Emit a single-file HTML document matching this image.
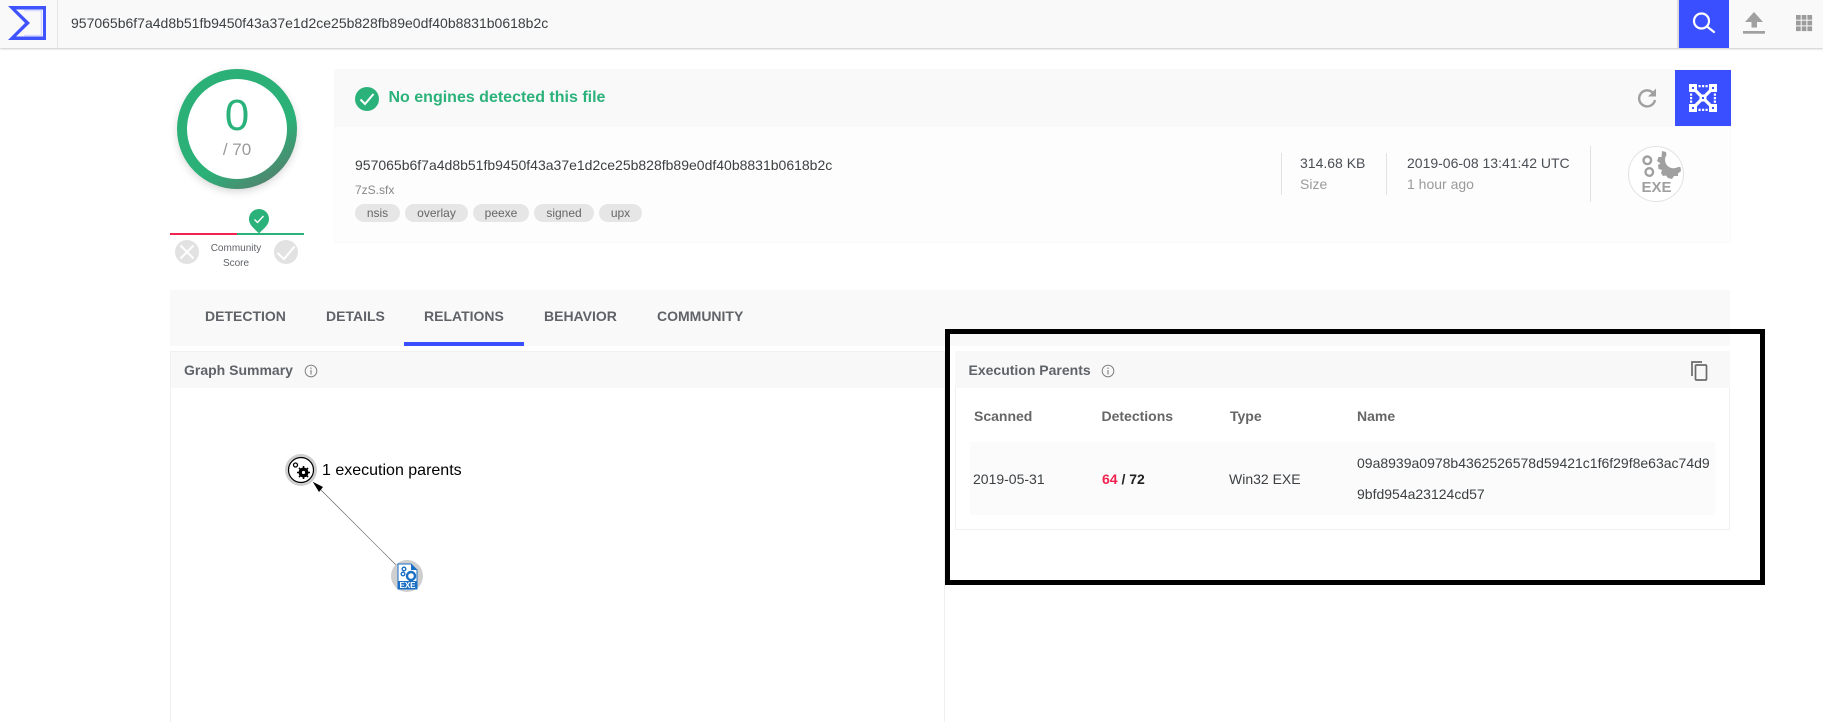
<!DOCTYPE html>
<html lang="en"><head><meta charset="utf-8"><title>VirusTotal</title>
<style>
html,body{margin:0;padding:0;background:#fff}
body{position:relative;width:1823px;height:722px;overflow:hidden;font-family:"Liberation Sans",Arial,sans-serif;font-size:14px;color:#333}
.a{position:absolute}
.t{position:absolute;white-space:nowrap;line-height:20px;height:20px}
.b{font-weight:bold}
.tab{position:absolute;top:306px;line-height:20px;font-weight:bold;font-size:14px;color:#5f6368;white-space:nowrap}
.tag{position:absolute;top:204px;height:18px;line-height:18px;border-radius:9px;background:#e6e6e6;color:#666;font-size:12px;text-align:center}
.th{position:absolute;top:406px;line-height:20px;font-weight:bold;color:#666;font-size:14px;white-space:nowrap}
svg{position:absolute;overflow:visible}
</style></head><body>

<!-- top bar -->
<div class="a" style="left:0;top:0;width:1823px;height:48px;background:#f9f9f9;box-shadow:0 1px 2px rgba(0,0,0,.22)"></div>
<div class="a" style="left:57px;top:0;width:1px;height:48px;background:#e4e4e4"></div>
<svg style="left:0;top:0" width="60" height="48" viewBox="0 0 60 48">
<path d="M8 6H46V40H8L25 23Z M16 9.500L30 23L16 36.500H43V9.500Z" fill="#3f53ff" fill-rule="evenodd"/>
<path d="M24 10.500H41.500V35.500H24" fill="none" stroke="#d5d9fd" stroke-width="1.500"/>
</svg>
<div class="t" style="left:71px;top:13px;color:#3c4043">957065b6f7a4d8b51fb9450f43a37e1d2ce25b828fb89e0df40b8831b0618b2c</div>
<div class="a" style="left:1677px;top:0;width:2px;height:48px;background:#dcdcdc"></div>
<div class="a" style="left:1679px;top:0;width:50px;height:48px;background:#3a4fff"></div>
<svg style="left:1679px;top:0" width="50" height="48" viewBox="0 0 50 48" fill="none" stroke="#fff" stroke-width="2.200">
<circle cx="22.500" cy="21" r="7.500"/><path d="M28 26.500L35 32" stroke-linecap="round"/>
</svg>
<svg style="left:1740px;top:8px" width="30" height="30" viewBox="0 0 30 30" fill="#a0a0a0">
<path d="M14 4L23 14H17V19.500H11.500V14H5Z"/><rect x="3" y="23" width="22" height="2.700"/>
</svg>
<svg style="left:1796px;top:15px" width="16" height="16" viewBox="0 0 16 16" fill="#9c9c9c">
<rect x="0" y="0" width="4.700" height="4.700"/><rect x="5.700" y="0" width="4.700" height="4.700"/><rect x="11.400" y="0" width="4.700" height="4.700"/>
<rect x="0" y="5.700" width="4.700" height="4.700"/><rect x="5.700" y="5.700" width="4.700" height="4.700"/><rect x="11.400" y="5.700" width="4.700" height="4.700"/>
<rect x="0" y="11.400" width="4.700" height="4.700"/><rect x="5.700" y="11.400" width="4.700" height="4.700"/><rect x="11.400" y="11.400" width="4.700" height="4.700"/>
</svg>

<!-- gauge -->
<svg style="left:170px;top:60px" width="134" height="150" viewBox="0 0 134 150">
<defs>
<linearGradient id="g" x1="0.300" y1="0.300" x2="0.750" y2="1"><stop offset="0.550" stop-color="#2bb077"/><stop offset="1" stop-color="#54806e"/></linearGradient>
<filter id="s" x="-30%" y="-30%" width="160%" height="160%"><feGaussianBlur stdDeviation="5"/></filter>
</defs>
<circle cx="67" cy="72" r="58" fill="#000" opacity=".22" filter="url(#s)"/>
<circle cx="67" cy="69" r="60" fill="url(#g)"/>
<circle cx="67" cy="69" r="50" fill="#fff"/>
</svg>
<div class="t" style="left:177px;width:120px;top:91px;height:50px;line-height:50px;text-align:center;font-size:44px;color:#2bb27a">0</div>
<div class="t" style="left:177px;width:120px;top:140px;text-align:center;font-size:17px;color:#9a9a9a">/ 70</div>

<!-- community -->
<div class="a" style="left:170px;top:233px;width:67px;height:2px;background:#f0224f"></div>
<div class="a" style="left:237px;top:233px;width:67px;height:2px;background:#2bb27a"></div>
<svg style="left:247px;top:208px" width="24" height="27" viewBox="0 0 24 27">
<path d="M12 25.500C8 21 2 17.500 2 11A10 10 0 0 1 22 11C22 17.500 16 21 12 25.500Z" fill="#2bb27a"/>
<path d="M7.500 11.500L10.500 14.500L16.500 8" fill="none" stroke="#fff" stroke-width="1.400"/>
</svg>
<svg style="left:175px;top:240px" width="24" height="24" viewBox="0 0 24 24">
<circle cx="12" cy="12" r="12" fill="#e2e2e2"/><path d="M5.500 5.500L18.500 18.500M18.500 5.500L5.500 18.500" stroke="#fff" stroke-width="2" fill="none"/>
</svg>
<svg style="left:274px;top:240px" width="24" height="24" viewBox="0 0 24 24">
<circle cx="12" cy="12" r="12" fill="#e2e2e2"/><path d="M3.500 13L10 19L20.500 6.500" stroke="#fff" stroke-width="2" fill="none"/>
</svg>
<div class="t" style="left:196px;width:80px;top:239px;text-align:center;font-size:10px;color:#5f6368">Community</div>
<div class="t" style="left:196px;width:80px;top:254px;text-align:center;font-size:10px;color:#5f6368">Score</div>

<!-- file card -->
<div class="a" style="left:334px;top:69px;width:1397px;height:57px;background:#f9f9f9"></div>
<div class="a" style="left:334px;top:126px;width:1397px;height:117px;background:#fdfdfd;box-shadow:0 0 0 1px #f9f9f9 inset"></div>
<svg style="left:355px;top:87px" width="24" height="24" viewBox="0 0 24 24">
<circle cx="12" cy="12" r="12" fill="#2bb27a"/><path d="M5.500 12.500L10 17L18.500 7" fill="none" stroke="#fff" stroke-width="2"/>
</svg>
<div class="t b" style="left:388.500px;top:88px;font-size:16px;color:#2bb27a">No engines detected this file</div>
<svg style="left:1636px;top:87px" width="22" height="22" viewBox="0 0 22 22">
<path d="M17.500 6.500A8 8 0 1 0 19 13" fill="none" stroke="#a0a0a0" stroke-width="2.400"/><path d="M20 1.500V9.500H12Z" fill="#a0a0a0"/>
</svg>
<div class="a" style="left:1675px;top:70px;width:56px;height:56px;background:#3a4fff"></div>
<svg style="left:1689px;top:84px" width="28" height="28" viewBox="0 0 28 28">
<g fill="#fff">
<path d="M0 0H8V8H0ZM20 0H28V8H20ZM0 20H8V28H0ZM20 20H28V28H20ZM10.500 10.500H17.500V17.500H10.500Z"/>
<path d="M9.500 1H11.700V3.200H9.500ZM13 1H15.200V3.200H13ZM16.500 1H18.700V3.200H16.500ZM9.500 24.800H11.700V27H9.500ZM13 24.800H15.200V27H13ZM16.500 24.800H18.700V27H16.500ZM1 9.500H3.200V11.700H1ZM1 13H3.200V15.200H1ZM1 16.500H3.200V18.700H1ZM24.800 9.500H27V11.700H24.800ZM24.800 13H27V15.200H24.800ZM24.800 16.500H27V18.700H24.800Z"/>
</g>
<path d="M6 6L22 22M22 6L6 22" stroke="#fff" stroke-width="3.200"/>
<path d="M3 3H5V5H3ZM23 3H25V5H23ZM3 23H5V25H3ZM23 23H25V25H23ZM13 13H15V15H13Z" fill="#3a4fff"/>
</svg>

<div class="t" style="left:355px;top:155px;color:#3c4043">957065b6f7a4d8b51fb9450f43a37e1d2ce25b828fb89e0df40b8831b0618b2c</div>
<div class="t" style="left:355px;top:180px;font-size:12px;color:#888">7zS.sfx</div>
<div class="tag" style="left:355px;width:45px">nsis</div>
<div class="tag" style="left:405px;width:63px">overlay</div>
<div class="tag" style="left:473px;width:56px">peexe</div>
<div class="tag" style="left:534px;width:60px">signed</div>
<div class="tag" style="left:599px;width:43px">upx</div>

<div class="a" style="left:1281px;top:153px;width:1px;height:42px;background:#e2e2e2"></div>
<div class="t" style="left:1300px;top:153px;color:#4a4f55">314.68 KB</div>
<div class="t" style="left:1300px;top:174px;color:#9a9a9a">Size</div>
<div class="a" style="left:1386px;top:153px;width:1px;height:42px;background:#e2e2e2"></div>
<div class="t" style="left:1407px;top:153px;color:#4a4f55">2019-06-08 13:41:42 UTC</div>
<div class="t" style="left:1407px;top:174px;color:#9a9a9a">1 hour ago</div>
<div class="a" style="left:1590px;top:146px;width:1px;height:56px;background:#e2e2e2"></div>
<svg style="left:1628px;top:146px" width="56" height="56" viewBox="0 0 56 56">
<circle cx="28" cy="28" r="27.500" fill="#fff" stroke="#e2e2e2"/>
<g fill="none" stroke="#a0a0a0" stroke-width="2.400"><circle cx="19.300" cy="14.300" r="3.800"/><circle cx="21.300" cy="26" r="3.800"/></g>
<path d="M34 5L38 6L38.500 9A8.500 8.500 0 0 0 50 21L52.500 21L53 25L50 27.500V30H46L44 33L40 32L38 29.500L35 30L33 27L34 24L30.500 23L30 19L32.500 17.500L29 15L30.500 11H33.500Z" fill="#a0a0a0"/>
<text x="28.500" y="46" text-anchor="middle" font-family="Liberation Sans" font-weight="bold" font-size="15" fill="#a0a0a0">EXE</text>
</svg>

<!-- tabs -->
<div class="a" style="left:170px;top:290px;width:1560px;height:56px;background:#f9f9f9"></div>
<div class="tab" style="left:205px">DETECTION</div>
<div class="tab" style="left:326px">DETAILS</div>
<div class="tab" style="left:424px">RELATIONS</div>
<div class="tab" style="left:544px">BEHAVIOR</div>
<div class="tab" style="left:657px">COMMUNITY</div>
<div class="a" style="left:404px;top:342px;width:120px;height:4px;background:#3a4fff"></div>

<!-- left panel -->
<div class="a" style="left:170px;top:351px;width:775px;height:37px;background:#f8f8f8"></div>
<div class="a" style="left:170px;top:351px;width:775px;height:1px;background:#f0f0f0"></div>
<div class="a" style="left:170px;top:351px;width:1px;height:371px;background:#efefef"></div>
<div class="a" style="left:944px;top:351px;width:1px;height:371px;background:#efefef"></div>
<div class="t b" style="left:184px;top:360px;color:#5f6368">Graph Summary</div>
<svg style="left:304px;top:364px" width="14" height="14" viewBox="0 0 14 14">
<circle cx="7" cy="7" r="5.800" fill="none" stroke="#808080"/><path d="M7 6V10.500M7 3.500V5" stroke="#808080" stroke-width="1.100"/>
</svg>

<svg style="left:280px;top:450px" width="150" height="145" viewBox="280 450 150 145">
<path d="M396 565L316 485" stroke="#555" stroke-width=".6"/>
<path d="M312.700 481.700L323 487L319 492Z" fill="#000"/>
<circle cx="301" cy="470" r="16" fill="#cfcfcf"/>
<circle cx="301" cy="470" r="12.500" fill="#fff" stroke="#000" stroke-width="1.200"/>
<circle cx="295.500" cy="465" r="2" fill="none" stroke="#000" stroke-width="1.300"/>
<circle cx="303.500" cy="472.500" r="3.500" fill="none" stroke="#000" stroke-width="3"/>
<path d="M303.500 466V479M297 472.500H310M299 468L308 477M308 468L299 477" stroke="#000" stroke-width="1.600"/>
<circle cx="303.500" cy="472.500" r="1.600" fill="#fff"/>
<circle cx="407" cy="576" r="16" fill="#cfcfcf"/>
<path d="M398 564H411L417 570V589H398Z" fill="#fff"/>
<path d="M398 564H411L417 570V589H398Z" fill="none" stroke="#1a6fc4" stroke-width="1"/>
<path d="M411 564L417 570H411Z" fill="#1a6fc4"/>
<rect x="398" y="581" width="19" height="8" fill="#1a6fc4"/>
<g fill="none" stroke="#1a6fc4" stroke-width="1.400"><circle cx="404" cy="569" r="1.800"/><circle cx="403" cy="574" r="1.800"/></g>
<circle cx="411" cy="576" r="4" fill="#fff" stroke="#1a6fc4" stroke-width="2.400"/>
<text x="407.500" y="588" text-anchor="middle" font-family="Liberation Sans" font-weight="bold" font-size="8" fill="#fff">EXE</text>
</svg>
<div class="t" style="left:322px;top:461px;font-size:16px;color:#000">1 execution parents</div>

<!-- right panel -->
<div class="a" style="left:955px;top:351px;width:773px;height:177px;border:1px solid #f0f0f0;box-sizing:content-box;background:#fff"></div>
<div class="a" style="left:955px;top:351px;width:775px;height:37px;background:#f8f8f8"></div>
<div class="t b" style="left:968.500px;top:360px;color:#5f6368">Execution Parents</div>
<svg style="left:1101px;top:364px" width="14" height="14" viewBox="0 0 14 14">
<circle cx="7" cy="7" r="5.800" fill="none" stroke="#808080"/><path d="M7 6V10.500M7 3.500V5" stroke="#808080" stroke-width="1.100"/>
</svg>
<svg style="left:1690px;top:360px" width="20" height="22" viewBox="0 0 20 22" fill="none" stroke="#6b6b6b" stroke-width="1.700">
<path d="M2 16V2H12"/><rect x="5.500" y="5" width="11" height="15" rx="1"/>
</svg>
<div class="th" style="left:974px">Scanned</div>
<div class="th" style="left:1101.500px">Detections</div>
<div class="th" style="left:1230px">Type</div>
<div class="th" style="left:1357px">Name</div>
<div class="a" style="left:970px;top:442px;width:745px;height:73px;background:#fbfbfb"></div>
<div class="t" style="left:973px;top:469px;color:#3c4043">2019-05-31</div>
<div class="t b" style="left:1102px;top:469px;font-size:14px;color:#222"><span style="color:#f0224f">64</span> / 72</div>
<div class="t" style="left:1229px;top:469px;color:#3c4043">Win32 EXE</div>
<div class="t" style="left:1357px;top:453px;color:#3c4043">09a8939a0978b4362526578d59421c1f6f29f8e63ac74d9</div>
<div class="t" style="left:1357px;top:484px;color:#3c4043">9bfd954a23124cd57</div>

<!-- black annotation -->
<div class="a" style="left:945px;top:329px;width:820px;height:256px;border:5px solid #000;box-sizing:border-box"></div>
</body></html>
